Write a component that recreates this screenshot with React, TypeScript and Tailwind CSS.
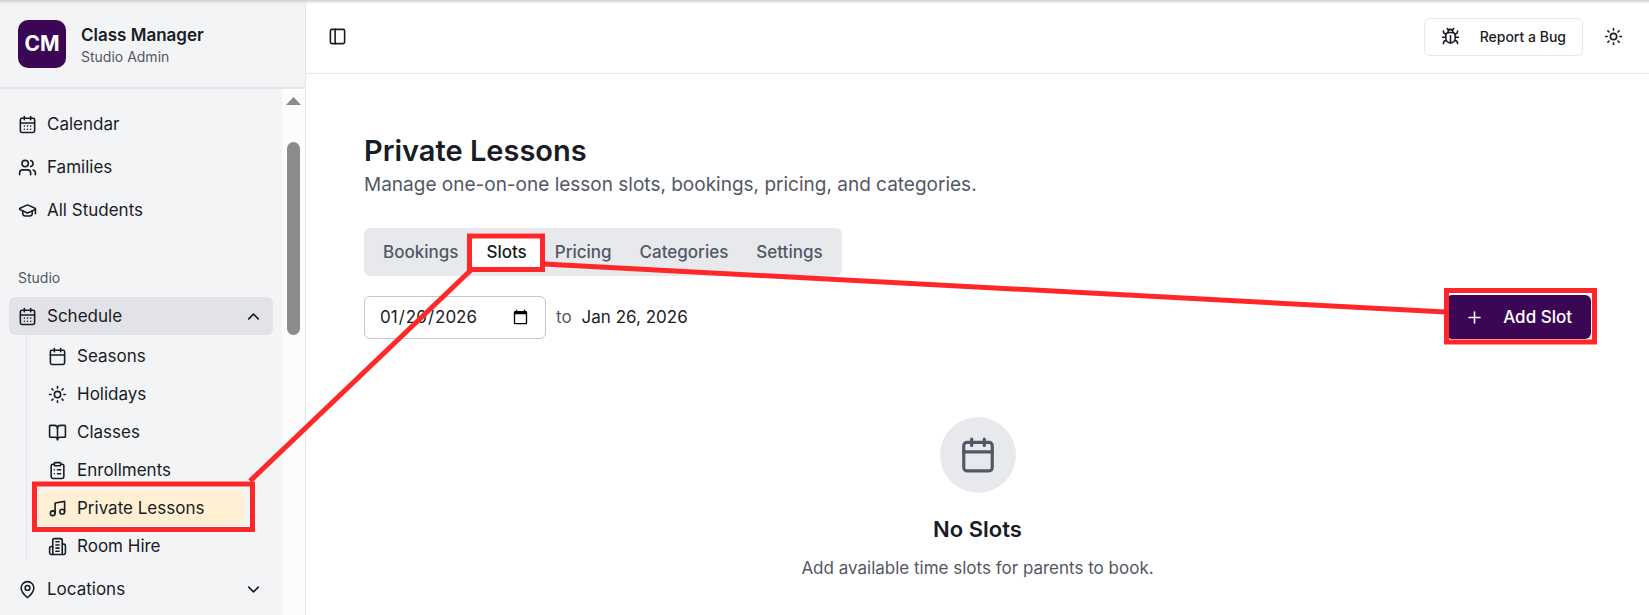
import { useState } from "react";
import {
  BookOpen,
  Bug,
  Calendar,
  CalendarDays,
  ChevronDown,
  ChevronUp,
  ClipboardList,
  GraduationCap,
  MapPin,
  Music,
  PanelLeft,
  Plus,
  Sun,
  Users,
} from "lucide-react";
import type { ComponentType } from "react";

type NavItem = { label: string; icon: ComponentType<{ className?: string }> };

const mainNav: NavItem[] = [
  { label: "Calendar", icon: CalendarDays },
  { label: "Families", icon: Users },
  { label: "All Students", icon: GraduationCap },
];

const scheduleNav: NavItem[] = [
  { label: "Seasons", icon: Calendar },
  { label: "Holidays", icon: Sun },
  { label: "Classes", icon: BookOpen },
  { label: "Enrollments", icon: ClipboardList },
  { label: "Private Lessons", icon: Music },
  { label: "Room Hire", icon: Building },
];

const tabs = ["Bookings", "Slots", "Pricing", "Categories", "Settings"];

function Building({ className }: { className?: string }) {
  return (
    <svg className={className} viewBox="0 0 24 24" fill="none" stroke="currentColor" strokeWidth="2" strokeLinecap="round" strokeLinejoin="round">
      <path d="M6 22V4a2 2 0 0 1 2-2h8a2 2 0 0 1 2 2v18Z" />
      <path d="M6 12H4a2 2 0 0 0-2 2v6a2 2 0 0 0 2 2h2" />
      <path d="M18 9h2a2 2 0 0 1 2 2v9a2 2 0 0 1-2 2h-2" />
      <path d="M10 6h4" />
      <path d="M10 10h4" />
      <path d="M10 14h4" />
      <path d="M10 18h4" />
    </svg>
  );
}

function Sidebar() {
  const [open, setOpen] = useState(true);

  return (
    <aside className="flex w-[306px] shrink-0 flex-col border-r border-gray-200 bg-gray-100">
      <div className="flex items-center gap-[15px] border-b-2 border-gray-200 px-[18px] pt-5 pb-[19px]">
        <div className="flex h-12 w-12 items-center justify-center rounded-[10px] bg-[#3b0754] text-[21px] font-bold text-white">CM</div>
        <div className="pt-[3px]">
          <div className="text-[17px] leading-[22px] font-semibold">Class Manager</div>
          <div className="text-[14px] leading-[21px] text-[#515865]">Studio Admin</div>
        </div>
      </div>

      <div className="flex min-h-0 flex-1">
        <nav className="min-w-0 flex-1 overflow-hidden px-[9px] pt-4 text-[17px] leading-[27px]">
          <ul className="space-y-[5px]">
            {mainNav.map(({ label, icon: Icon }) => (
              <li key={label}>
                <a href="#" className="flex h-[38px] items-center gap-[10px] rounded-md px-[9px]">
                  <Icon className="h-[19px] w-[19px]" /> {label}
                </a>
              </li>
            ))}
          </ul>

          <div className="mt-[29px] flex h-[39px] items-center px-[9px] text-[14px] text-[#515865]">Studio</div>

          <button
            type="button"
            aria-expanded={open}
            onClick={() => setOpen(!open)}
            className="flex h-[38px] w-full items-center gap-[10px] rounded-md bg-[#e2e3e8] pr-[10px] pl-[9px]"
          >
            <CalendarDays className="h-[19px] w-[19px]" /> Schedule
            {open ? <ChevronUp className="ml-auto h-[19px] w-[19px]" /> : <ChevronDown className="ml-auto h-[19px] w-[19px]" />}
          </button>
          {open && (
            <ul className="mr-[29px] ml-[17px] space-y-1 border-l border-gray-200 pt-1 pl-[11px]">
              {scheduleNav.map(({ label, icon: Icon }) => (
                <li key={label}>
                  <a
                    href="#"
                    className={`flex h-[34px] items-center gap-[10px] rounded-md px-[10px] ${label === "Private Lessons" ? "bg-[#fff0d4]" : ""}`}
                  >
                    <Icon className="h-[19px] w-[19px]" /> {label}
                  </a>
                </li>
              ))}
            </ul>
          )}

          <button type="button" className="mt-[7px] flex h-[38px] w-full items-center gap-[10px] rounded-md pr-[10px] pl-[9px]">
            <MapPin className="h-[19px] w-[19px]" /> Locations
            <ChevronDown className="ml-auto h-[19px] w-[19px]" />
          </button>
        </nav>

        <div className="flex w-[23px] flex-col items-center bg-[#fcfcfc] pt-2">
          <svg className="h-2 w-[15px]" viewBox="0 0 15 8" fill="#8b8b8b">
            <path d="M7.5 0 15 8H0Z" />
          </svg>
          <div className="mt-[37px] h-[193px] w-[13px] rounded-full bg-[#8b8b8b]" />
        </div>
      </div>
    </aside>
  );
}

// Walkthrough markers: sidebar entry -> tab -> action button
function Guide() {
  return (
    <svg className="pointer-events-none absolute top-0 left-0" width="1649" height="615" fill="none" stroke="#ff2828" strokeWidth="5">
      <rect x="34.5" y="484" width="218" height="45.5" />
      <rect x="469.5" y="236" width="73" height="33.5" />
      <rect x="1446.5" y="290.5" width="148" height="51.5" />
      <path d="M250 481 471 270" />
      <path d="M544 264 1446 312" />
    </svg>
  );
}

export default function App() {
  const [tab, setTab] = useState("Slots");
  const [start, setStart] = useState("2026-01-20");

  return (
    <div className="relative flex h-screen overflow-hidden bg-white font-['Inter',sans-serif] text-[#191c24]">
      <Sidebar />

      <div className="flex min-w-0 flex-1 flex-col">
        <header className="flex h-[74px] items-center justify-between border-b border-gray-200 pr-[26px] pl-[22px]">
          <button type="button" aria-label="Toggle sidebar">
            <PanelLeft className="h-[19px] w-[19px]" />
          </button>
          <div className="flex items-center gap-[21px]">
            <button type="button" className="flex h-[38px] items-center gap-5 rounded-md border border-gray-200 px-4 text-[14px] font-medium">
              <Bug className="h-[19px] w-[19px]" /> Report a Bug
            </button>
            <button type="button" aria-label="Toggle theme">
              <Sun className="h-[19px] w-[19px]" />
            </button>
          </div>
        </header>

        <main className="flex-1 px-[58px] pt-[58px] text-[17px] leading-[27px]">
          <h1 className="text-[29px] leading-[38px] font-semibold">Private Lessons</h1>
          <p className="text-[19px] leading-[30px] text-[#515865]">Manage one-on-one lesson slots, bookings, pricing, and categories.</p>

          <div className="mt-7 flex">
            <div role="tablist" className="flex h-12 items-center rounded-md bg-[#e8e9ed] px-[5px]">
              {tabs.map((name) => (
                <button
                  key={name}
                  type="button"
                  role="tab"
                  aria-selected={tab === name}
                  onClick={() => setTab(name)}
                  className={`h-[38px] rounded px-[14px] font-medium ${tab === name ? "bg-white" : "text-[#515865]"}`}
                >
                  {name}
                </button>
              ))}
            </div>
          </div>

          <div className="mt-[19px] flex items-center justify-between">
            <div className="flex items-center gap-[10px]">
              <input
                type="date"
                aria-label="Start date"
                value={start}
                onChange={(e) => setStart(e.target.value)}
                className="h-[43px] w-[182px] rounded-md border border-[#c5c8d3] px-[14px]"
              />
              <span className="text-[#515865]">to</span>
              <span>Jan 26, 2026</span>
            </div>
            <button type="button" className="flex h-[44px] items-center gap-[19px] rounded-md bg-[#3b0754] px-[19px] font-medium text-white">
              <Plus className="h-[19px] w-[19px]" /> Add Slot
            </button>
          </div>

          <div className="mt-[78px] flex flex-col items-center">
            <div className="flex h-[76px] w-[76px] items-center justify-center rounded-full bg-[#e8e9ed] text-[#515865]">
              <Calendar className="h-[38px] w-[38px]" />
            </div>
            <h2 className="mt-5 text-[22px] leading-8 font-semibold">No Slots</h2>
            <p className="mt-[10px] text-[#515865]">Add available time slots for parents to book.</p>
          </div>
        </main>
      </div>

      <div className="absolute inset-x-0 top-0 h-1 bg-linear-to-b from-[#cfcfcf] to-transparent" />
      <Guide />
    </div>
  );
}
